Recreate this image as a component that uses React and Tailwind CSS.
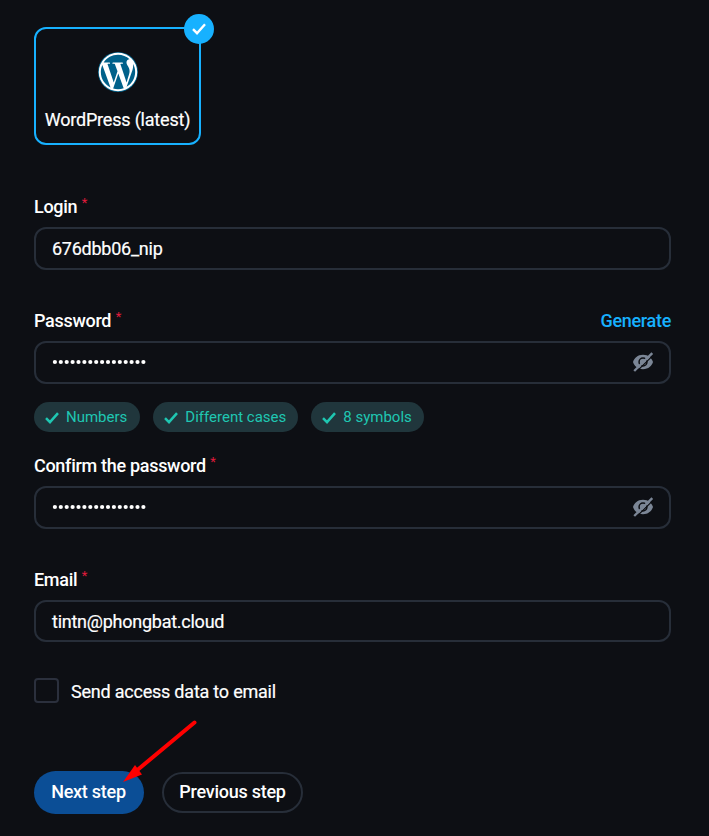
function WordPressLogo() {
  return (
    <svg viewBox="0 0 122.52 122.52" className="size-10" fill="#00618a">
      <circle cx="61.26" cy="61.26" r="61.26" />
      <circle cx="61.26" cy="61.26" r="59" fill="#fff" />
      <path d="m8.708 61.26c0 20.802 12.089 38.779 29.619 47.298l-25.069-68.686c-2.916 6.536-4.55 13.769-4.55 21.388z" />
      <path d="m96.74 58.608c0-6.495-2.333-10.993-4.334-14.494-2.664-4.329-5.161-7.995-5.161-12.324 0-4.831 3.664-9.328 8.825-9.328.233 0 .454.029.681.042-9.35-8.566-21.807-13.796-35.489-13.796-18.36 0-34.513 9.42-43.91 23.688 1.233.037 2.395.063 3.382.063 5.497 0 14.006-.667 14.006-.667 2.833-.167 3.167 3.994.337 4.329 0 0-2.847.335-6.015.501l19.138 56.925 11.501-34.493-8.188-22.434c-2.83-.166-5.511-.501-5.511-.501-2.832-.166-2.5-4.496.332-4.329 0 0 8.679.667 13.843.667 5.496 0 14.006-.667 14.006-.667 2.835-.167 3.168 3.994.337 4.329 0 0-2.853.335-6.015.501l18.992 56.494 5.242-17.517c2.272-7.269 4.001-12.49 4.001-16.989z" />
      <path d="m62.184 65.857-15.768 45.819c4.708 1.384 9.687 2.141 14.846 2.141 6.12 0 11.989-1.058 17.452-2.979-.141-.225-.269-.464-.374-.724z" />
      <path d="m107.376 36.046c.226 1.674.354 3.471.354 5.404 0 5.333-.996 11.328-3.996 18.824l-16.053 46.413c15.624-9.111 26.133-26.038 26.133-45.428.001-9.137-2.333-17.729-6.438-25.213z" />
    </svg>
  );
}

function Check({ className, width }) {
  return (
    <svg viewBox="0 0 14 12" className={className} fill="none" stroke="currentColor" strokeWidth={width}>
      <path d="M1 6.2 L5 10.2 L13 1.2" />
    </svg>
  );
}

function EyeOff() {
  return (
    <svg viewBox="0 0 22 20" className="-mr-px mb-[2px] h-5 w-[22px] shrink-0 text-[#7b8696]" fill="none">
      <path
        fill="currentColor"
        fillRule="evenodd"
        d="M11 2.8 C5.5 2.8 2.3 6.2 1 10 C2.3 13.8 5.5 17.2 11 17.2 C16.5 17.2 19.7 13.8 21 10 C19.7 6.2 16.5 2.8 11 2.8 Z M11 5.3 A4.7 4.7 0 1 1 11 14.7 A4.7 4.7 0 1 1 11 5.3 Z"
      />
      <path fill="currentColor" d="M11 6.8 A3.2 3.2 0 1 1 11 13.2 A3.2 3.2 0 1 1 11 6.8 Z" />
      <path d="M3.8 20.3 L21.8 2.7" stroke="#0d0f14" strokeWidth="1.2" />
      <path d="M2.2 19 L20.3 1.2" stroke="currentColor" strokeWidth="2.4" />
    </svg>
  );
}

function Label({ children }) {
  return (
    <span className="flex text-[18px] leading-[22px] font-medium tracking-[-0.3px]">
      {children}
      <sup className="top-0 ml-[4.5px] text-[13px] leading-[13px] font-normal text-[#e01b3c]">*</sup>
    </span>
  );
}

function Field({ children, hidden, height = "h-[43px]" }) {
  return (
    <div className={`flex w-[637px] items-center justify-between rounded-[12px] border-2 border-[#272e39] px-4 text-[18px] tracking-[-0.25px] [-webkit-text-stroke:0.2px] ${height}`}>
      {children}
      {hidden && <EyeOff />}
    </div>
  );
}

function Dots() {
  return (
    <svg viewBox="0 0 96 6" className="mb-[2px] h-[6px] w-24" fill="#fff">
      {Array.from({ length: 16 }, (_, i) => (
        <circle key={i} cx={2.9 + i * 5.9} cy="3" r="2.1" />
      ))}
    </svg>
  );
}

function Chip({ children, padding = "pr-3" }) {
  return (
    <span className={`flex h-[30px] items-center gap-[7px] rounded-full bg-[#20363c] pl-[11px] text-[15px] text-[#1fc7b2] ${padding}`}>
      <Check className="mt-px h-3 w-[14px]" width={2.5} />
      {children}
    </span>
  );
}

export default function App() {
  return (
    <main className="flex h-[836px] w-[709px] flex-col items-start overflow-hidden bg-[#0d0f14] pt-[27px] pl-[34px] font-['Roboto',sans-serif] text-white">
      <div className="relative flex h-[118px] w-[167px] flex-col items-center rounded-[12px] border-2 border-[#17b1ff] pt-[23px]">
        <WordPressLogo />
        <span className="mt-[17px] text-[18px] leading-[22px] tracking-[-0.2px] whitespace-nowrap [-webkit-text-stroke:0.2px]">WordPress (latest)</span>
        <span className="absolute -top-[15px] -right-[15px] flex size-[30px] items-center justify-center rounded-full bg-[#17b1ff]">
          <Check className="h-3 w-[14px]" width={2.4} />
        </span>
      </div>

      <div className="mt-[51px]"><Label>Login</Label></div>
      <div className="mt-[9px]"><Field>676dbb06_nip</Field></div>

      <div className="mt-[40px] flex w-[637px] justify-between">
        <Label>Password</Label>
        <span className="text-[18px] leading-[22px] font-medium tracking-[-0.3px] text-[#17b1ff]">Generate</span>
      </div>
      <div className="mt-[9px]"><Field hidden><Dots /></Field></div>

      <div className="mt-[18px] flex gap-[13px]">
        <Chip padding="pr-[13px]">Numbers</Chip>
        <Chip>Different cases</Chip>
        <Chip>8 symbols</Chip>
      </div>

      <div className="mt-[23px]"><Label>Confirm the password</Label></div>
      <div className="mt-[9px]"><Field hidden><Dots /></Field></div>

      <div className="mt-[40px]"><Label>Email</Label></div>
      <div className="mt-[9px]"><Field height="h-[42px]">tintn@phongbat.cloud</Field></div>

      <label className="mt-[36px] flex items-center gap-3 text-[18px] leading-[22px] tracking-[-0.22px]">
        <span className="size-[25px] rounded-[4px] border-2 border-[#2b303d]" />
        <span className="mt-[2px] [-webkit-text-stroke:0.2px]">Send access data to email</span>
      </label>

      <div className="relative mt-[68px] flex items-center gap-[18px] text-[18px] font-medium tracking-[-0.25px]">
        <button className="h-[43px] w-[110px] rounded-full bg-[#0b4e96] pr-px pb-[2px]">Next step</button>
        <button className="h-[41px] w-[141px] rounded-full border-2 border-[#272e39] pb-[2px]">Previous step</button>
        <svg viewBox="0 0 80 68" className="absolute -top-[54px] left-[86px] h-[68px] w-20" fill="#f00">
          <path d="M74.5 5.5 L15 55" stroke="#f00" strokeWidth="4" strokeLinecap="round" />
          <path d="M3 65 L15 48 L22 57.5 Z" />
        </svg>
      </div>
    </main>
  );
}
